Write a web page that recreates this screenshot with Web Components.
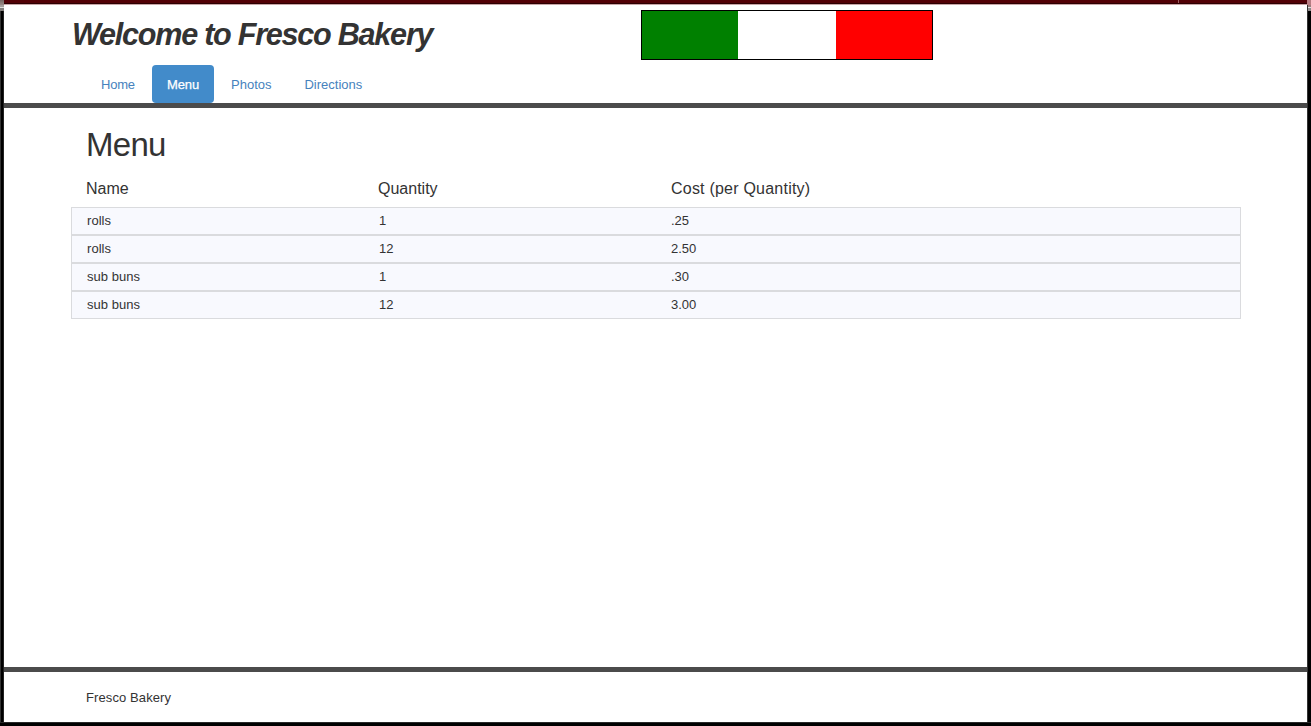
<!DOCTYPE html>
<html lang="en">
<head>
<meta charset="utf-8">
<title>Fresco Bakery</title>
<style>
html, body { margin: 0; height: 100%; overflow: hidden; background: #000; }
body { font: 13px/18px "Liberation Sans", Arial, sans-serif; letter-spacing: .05px; color: #333; }
</style>
</head>
<body>
<bakery-window>
  <bakery-header slot="header">
    Welcome to Fresco Bakery
    <bakery-flag slot="flag"></bakery-flag>
    <nav-pill slot="nav">Home</nav-pill>
    <nav-pill slot="nav" active>Menu</nav-pill>
    <nav-pill slot="nav">Photos</nav-pill>
    <nav-pill slot="nav">Directions</nav-pill>
  </bakery-header>
  <menu-list>
    <span slot="title">Menu</span>
    <menu-row heading><span slot="name">Name</span><span slot="quantity">Quantity</span><span slot="cost">Cost (per Quantity)</span></menu-row>
    <menu-row><span slot="name">rolls</span><span slot="quantity">1</span><span slot="cost">.25</span></menu-row>
    <menu-row><span slot="name">rolls</span><span slot="quantity">12</span><span slot="cost">2.50</span></menu-row>
    <menu-row><span slot="name">sub buns</span><span slot="quantity">1</span><span slot="cost">.30</span></menu-row>
    <menu-row><span slot="name">sub buns</span><span slot="quantity">12</span><span slot="cost">3.00</span></menu-row>
  </menu-list>
  <bakery-footer slot="footer">Fresco Bakery</bakery-footer>
</bakery-window>
<script>
function define(name, html) {
  const template = document.createElement('template');
  template.innerHTML = html;
  customElements.define(name, class extends HTMLElement {
    constructor() {
      super();
      this.attachShadow({ mode: 'open' }).append(template.content.cloneNode(true));
    }
  });
}

define('bakery-window', `
<style>
:host { display: grid; grid-template: 5px 1fr 4px / 4px 1fr 4px; height: 100vh; background: #000; }
.bar { grid-area: 1 / 1 / 2 / 4; display: grid; grid-template-columns: 4px 1174px 1px 1fr 4px;
  background: linear-gradient(#520006 0 3px, #2d0003 3px 4px, #c9a5a7 4px 5px); }
.edge { background: linear-gradient(#756663, #9b8b88); }
.edge:last-child { background: #b77c83; }
.mark { background: #9d6065; height: 3px; }
.side { grid-row: 2; background: linear-gradient(#a5a19e 0 2px, #e0dedc 2px 3px, #827e7c 3px 6px, transparent 6px), linear-gradient(90deg, #333 0 1px, #000 1px 3px, #222 3px); }
.right { grid-column: 3; background: linear-gradient(#9c7b7b 0 2px, #ddd 2px 3px, #8c8888 3px 6px, transparent 6px) 1px 0 / 3px 100% no-repeat, linear-gradient(90deg, #333 0 1px, #000 1px); }
.page { grid-area: 2 / 2; background: #fff; display: flex; flex-direction: column; }
main { flex: 1; }
.bottom { grid-area: 3 / 1 / 4 / 4; background: linear-gradient(#292929 0 1px, #000 1px); }
</style>
<div class="bar"><i class="edge"></i><i></i><i class="mark"></i><i></i><i class="edge"></i></div>
<div class="side"></div>
<div class="page"><slot name="header"></slot><main><slot></slot></main><slot name="footer"></slot></div>
<div class="side right"></div>
<div class="bottom"></div>`);

define('bakery-header', `
<style>
:host { display: block; box-sizing: border-box; height: 103px; border-bottom: 5px solid #4b4b4b; }
.top { display: grid; grid-template-columns: 569px 292px; height: 60px; padding-left: 68px; box-sizing: border-box; }
h1 { margin: 0; padding-top: 11px; font: italic bold 30.6px/36px "Liberation Sans", Arial, sans-serif; letter-spacing: -1.26px; white-space: nowrap; }
.flag { padding-top: 5px; }
nav { display: flex; gap: 2px; padding-left: 82px; }
</style>
<div class="top"><h1><slot></slot></h1><div class="flag"><slot name="flag"></slot></div></div>
<nav><slot name="nav"></slot></nav>`);

define('bakery-flag', `
<style>
:host { display: grid; grid-template-columns: 96px 98px 96px; box-sizing: border-box; width: 292px; height: 50px; border: 1px solid #000; }
.green { background: #008000; }
.white { background: #fff; }
.red { background: #f00; }
</style>
<div class="green"></div><div class="white"></div><div class="red"></div>`);

define('nav-pill', `
<style>
:host { display: block; box-sizing: border-box; height: 38px; padding: 11px 15px 0; line-height: 18px; color: #4682bd; border-radius: 4px; letter-spacing: 0; }
:host(:first-of-type) { width: 64px; letter-spacing: -.2px; }
:host([active]) { width: 62px; background: #428bca; color: #fff; -webkit-text-stroke: .25px #fff; letter-spacing: -.1px; }
:host(:last-of-type) { margin-left: 1px; }
</style>
<slot></slot>`);

define('menu-list', `
<style>
:host { display: block; margin: 0 66px 0 67px; }
h1 { margin: 0; padding: 19px 0 0 15px; box-sizing: border-box; height: 66px; font: 33px/36px "Liberation Sans", Arial, sans-serif; letter-spacing: -.7px; }
</style>
<h1><slot name="title"></slot></h1>
<slot></slot>`);

define('menu-row', `
<style>
:host { display: grid; grid-template-columns: 292px 292px 1fr; box-sizing: border-box; height: 28px; padding: 4px 15px 0 15px; border: 1px solid #dadbde; background: #f8f9fe; }
:host([heading]) { grid-template-columns: 292px 293px 1fr; height: 33px; border: 0; background: none; font-size: 16px; padding-top: 6px; letter-spacing: 0; }
::slotted([slot=cost]) { letter-spacing: 0; }
:host([heading]) ::slotted([slot=cost]) { letter-spacing: .22px; }
</style>
<slot name="name"></slot><slot name="quantity"></slot><slot name="cost"></slot>`);

define('bakery-footer', `
<style>
:host { display: block; box-sizing: border-box; height: 55px; border-top: 5px solid #4b4b4b; padding: 17px 0 0 82px; letter-spacing: .1px; }
</style>
<slot></slot>`);
</script>
</body>
</html>
